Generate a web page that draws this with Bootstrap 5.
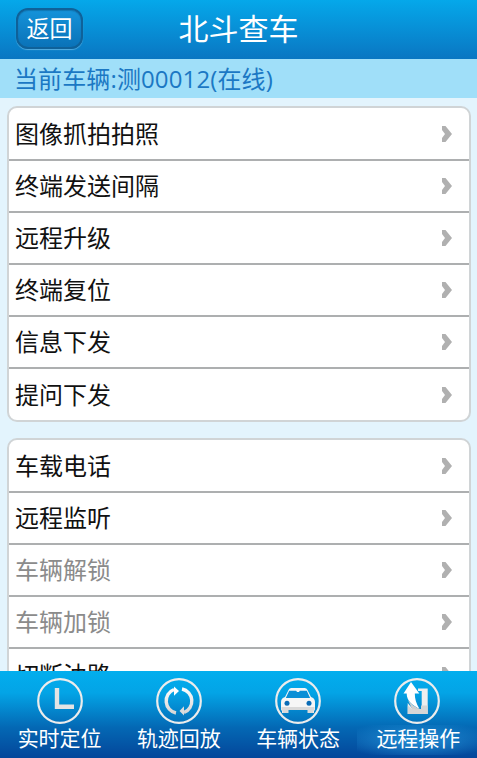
<!DOCTYPE html>
<html lang="zh">
<head>
<meta charset="utf-8">
<title>北斗查车</title>
<link href="https://cdn.jsdelivr.net/npm/bootstrap@5.3.0/dist/css/bootstrap.min.css" rel="stylesheet">
<style>
html,body{height:100%;overflow:hidden}
body{font-family:"Open Sans","Noto Sans CJK SC",sans-serif;background:#e3f4fd}
.app-shell{height:758px;width:477px}
.top-bar{height:59px;background:linear-gradient(#05a8ea,#0a76c2);padding:8px 0 0 16px}
.back-btn{width:67px;height:41px;border-radius:12px;border:2px solid #0f6199;background:linear-gradient(#1593da,#0a72b8);color:#fff;font-size:23px;line-height:1;padding:0 0 1px;box-shadow:0 1px 1px rgba(160,220,250,.5),inset 0 1px 1px rgba(10,70,110,.35)}
.top-title{color:#fff;font-size:30px;line-height:1;left:0;right:0;top:14px;text-align:center;pointer-events:none}
.status-line{height:39px;background:#a0dff9;color:#1b78c4;font-size:24px;line-height:39px;padding-left:14px;letter-spacing:.12px;white-space:nowrap}
.scroll-area{padding:8px 6px 0 7px;min-height:0}
.menu-group{background:#fff;border:2px solid #d0d4d6;border-radius:10px;margin-bottom:16px;overflow:hidden}
.menu-row{height:52px;padding:0 16px 0 6px;font-size:24px;line-height:1;color:#111;border-bottom:2px solid #adafb0;box-sizing:border-box}
.menu-row:first-child{height:53px;padding-top:1px}
.menu-row:last-child{border-bottom:0;height:51px}
.menu-row.muted-row{color:#8b8b8b}
.chev{width:12px;height:18px;flex:none}
.tab-bar{height:87px;background:linear-gradient(#02aeee 0%,#03a4e6 25%,#0468b4 65%,#04469a 100%)}
.tab-item{color:#fff;font-size:21px;line-height:1;padding-top:6px}
.tab-item svg{width:48px;height:48px;display:block}
.tab-label{margin-top:3px;white-space:nowrap}
.tab-active .tab-label{margin-top:0;padding:3px 17px 6px 19px;background:radial-gradient(ellipse at center,rgba(40,150,220,.85),rgba(10,90,170,0) 90%)}
</style>
</head>
<body>
<div class="app-shell d-flex flex-column">
  <div class="top-bar position-relative flex-shrink-0">
    <button type="button" class="btn back-btn d-block">返回</button>
    <div class="top-title position-absolute">北斗查车</div>
  </div>
  <div class="status-line flex-shrink-0">当前车辆:测00012(在线)</div>
  <div class="scroll-area flex-grow-1 overflow-hidden">
    <div class="menu-group">
      <div class="menu-row d-flex align-items-center justify-content-between"><span>图像抓拍拍照</span><svg class="chev" viewBox="0 0 12 18"><path d="M1 1h3.500L11 9l-6.500 8H1v-4l3-4-3-4z" fill="#b0b0b0"/></svg></div>
      <div class="menu-row d-flex align-items-center justify-content-between"><span>终端发送间隔</span><svg class="chev" viewBox="0 0 12 18"><path d="M1 1h3.500L11 9l-6.500 8H1v-4l3-4-3-4z" fill="#b0b0b0"/></svg></div>
      <div class="menu-row d-flex align-items-center justify-content-between"><span>远程升级</span><svg class="chev" viewBox="0 0 12 18"><path d="M1 1h3.500L11 9l-6.500 8H1v-4l3-4-3-4z" fill="#b0b0b0"/></svg></div>
      <div class="menu-row d-flex align-items-center justify-content-between"><span>终端复位</span><svg class="chev" viewBox="0 0 12 18"><path d="M1 1h3.500L11 9l-6.500 8H1v-4l3-4-3-4z" fill="#b0b0b0"/></svg></div>
      <div class="menu-row d-flex align-items-center justify-content-between"><span>信息下发</span><svg class="chev" viewBox="0 0 12 18"><path d="M1 1h3.500L11 9l-6.500 8H1v-4l3-4-3-4z" fill="#b0b0b0"/></svg></div>
      <div class="menu-row d-flex align-items-center justify-content-between"><span>提问下发</span><svg class="chev" viewBox="0 0 12 18"><path d="M1 1h3.500L11 9l-6.500 8H1v-4l3-4-3-4z" fill="#b0b0b0"/></svg></div>
    </div>
    <div class="menu-group">
      <div class="menu-row d-flex align-items-center justify-content-between"><span>车载电话</span><svg class="chev" viewBox="0 0 12 18"><path d="M1 1h3.500L11 9l-6.500 8H1v-4l3-4-3-4z" fill="#b0b0b0"/></svg></div>
      <div class="menu-row d-flex align-items-center justify-content-between"><span>远程监听</span><svg class="chev" viewBox="0 0 12 18"><path d="M1 1h3.500L11 9l-6.500 8H1v-4l3-4-3-4z" fill="#b0b0b0"/></svg></div>
      <div class="menu-row muted-row d-flex align-items-center justify-content-between"><span>车辆解锁</span><svg class="chev" viewBox="0 0 12 18"><path d="M1 1h3.500L11 9l-6.500 8H1v-4l3-4-3-4z" fill="#b0b0b0"/></svg></div>
      <div class="menu-row muted-row d-flex align-items-center justify-content-between"><span>车辆加锁</span><svg class="chev" viewBox="0 0 12 18"><path d="M1 1h3.500L11 9l-6.500 8H1v-4l3-4-3-4z" fill="#b0b0b0"/></svg></div>
      <div class="menu-row d-flex align-items-center justify-content-between"><span>切断油路</span><svg class="chev" viewBox="0 0 12 18"><path d="M1 1h3.500L11 9l-6.500 8H1v-4l3-4-3-4z" fill="#b0b0b0"/></svg></div>
    </div>
  </div>
  <div class="tab-bar row g-0 flex-shrink-0">
    <div class="tab-item col-3 d-flex flex-column align-items-center">
      <svg viewBox="0 0 48 48" fill="none"><circle cx="24" cy="24" r="21.800" stroke="#ececec" stroke-width="2.200"/><path d="M21 11v18.800h17" stroke="#e4e4e4" stroke-width="4.400"/></svg>
      <div class="tab-label">实时定位</div>
    </div>
    <div class="tab-item col-3 d-flex flex-column align-items-center">
      <svg viewBox="0 0 48 48" fill="none"><defs><linearGradient id="arcfill" gradientUnits="userSpaceOnUse" x1="0" y1="10" x2="0" y2="38"><stop offset="0" stop-color="#fff"/><stop offset="1" stop-color="#d4d4d4"/></linearGradient></defs><circle cx="24" cy="24" r="21.800" stroke="#ececec" stroke-width="2.200"/><path d="M21 36a12.300 12.300 0 0 1-2-23.500" stroke="url(#arcfill)" stroke-width="3.400"/><path d="M27 12a12.300 12.300 0 0 1 2 23.500" stroke="url(#arcfill)" stroke-width="3.400"/><path d="M19 9.500 24 14l-5 4.800z" fill="#fff"/><path d="M29 29.200 24.500 34l4.500 4.500z" fill="#dcdcdc"/></svg>
      <div class="tab-label">轨迹回放</div>
    </div>
    <div class="tab-item col-3 d-flex flex-column align-items-center">
      <svg viewBox="0 0 48 48" fill="none"><circle cx="24" cy="24" r="21.800" stroke="#ececec" stroke-width="2.200"/><path d="M11 20 14.500 13c.7-1.300 1.500-2 3-2h13c1.500 0 2.300.7 3 2L37 20c2.500.7 4 2.500 4 5v7c0 1-.5 1.500-1 2v2h-6v-3H14v3H8v-2c-.5-.5-1-1-1-2v-7c0-2.500 1.500-4.300 4-5z" fill="#f6f6f6"/><path d="M7.500 30h33v2.500l-1 1.500v2h-6v-3h-19v3h-6v-2l-1-1.500z" fill="#d9d9d9"/><path d="M15.200 13.700h7l.8 1.300h2l.8-1.300h7l3.300 7.300H11.800z" fill="#0a8fd6"/><circle cx="13" cy="26.300" r="2.500" fill="#0a6cb6"/><circle cx="35" cy="26.300" r="2.500" fill="#0a6cb6"/></svg>
      <div class="tab-label">车辆状态</div>
    </div>
    <div class="tab-item tab-active col-3 d-flex flex-column align-items-center">
      <svg viewBox="0 0 48 48" fill="none"><circle cx="24" cy="24" r="21.800" stroke="#ececec" stroke-width="2.200"/><path d="M25 11.500h9.700V37h-20V26l5 6h9V14H25z" fill="#eeeeee"/><path d="M14.700 28.500v8.500h20v-8.500h-6.700V32h-9z" fill="#d6d6d6"/><path d="M13.500 16.500h-3L18 5l8.300 11.500h-4.500c0 5 1.200 9.500 4.700 15.500-6-3-13-8-12.800-15.500z" fill="#fff"/><path d="M15 23c2.500 4 7 7 11.500 9-1 .5-6 .5-7.500 0z" fill="#cfcfcf"/></svg>
      <div class="tab-label">远程操作</div>
    </div>
  </div>
</div>
<script src="https://cdn.jsdelivr.net/npm/bootstrap@5.3.0/dist/js/bootstrap.bundle.min.js"></script>
</body>
</html>
